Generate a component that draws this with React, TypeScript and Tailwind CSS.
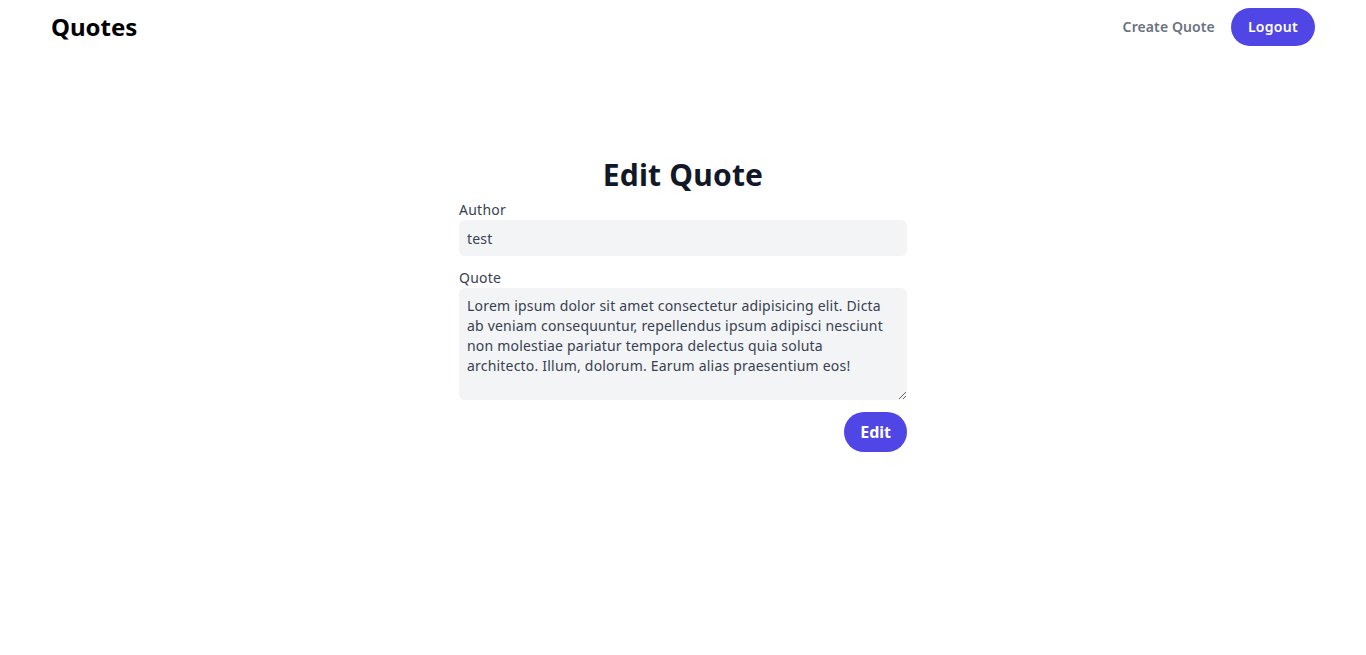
import { useState } from "react";

const initialQuote =
  "Lorem ipsum dolor sit amet consectetur adipisicing elit. Dicta ab veniam consequuntur, repellendus ipsum adipisci nesciunt non molestiae pariatur tempora delectus quia soluta architecto. Illum, dolorum. Earum alias praesentium eos!";

const Navbar = () => {
  return (
    <nav className="mx-auto flex max-w-7xl items-center justify-between px-2 py-2">
      <a href="#" className="text-2xl font-bold text-black">
        Quotes
      </a>
      <div className="flex items-center gap-4">
        <a href="#" className="text-sm font-semibold tracking-[0.1px] text-[#6b7280]">
          Create Quote
        </a>
        <button className="rounded-full bg-[#4f46e5] px-[17px] py-[9px] text-sm font-semibold tracking-[0.3px] text-white">
          Logout
        </button>
      </div>
    </nav>
  );
};

export default function App() {
  const [author, setAuthor] = useState("test");
  const [quote, setQuote] = useState(initialQuote);

  return (
    <div className="min-h-screen bg-white font-['Noto_Sans',sans-serif]">
      <Navbar />
      <main className="mx-auto max-w-md pt-[103px]">
        <h1 className="mb-[7px] text-center text-3xl font-bold tracking-[0.2px] text-[#111827]">
          Edit Quote
        </h1>
        <form
          className="flex flex-col"
          onSubmit={(event) => {
            event.preventDefault();
          }}
        >
          <label htmlFor="author" className="text-sm tracking-[0.25px] text-[#374151]">
            Author
          </label>
          <input
            id="author"
            type="text"
            className="h-9 w-full rounded-md bg-[#f3f4f6] px-2 text-sm tracking-[0.2px] text-[#374151] outline-none"
            value={author}
            onChange={(event) => setAuthor(event.target.value)}
          />
          <label htmlFor="quote" className="mt-3 text-sm tracking-[0.25px] text-[#374151]">
            Quote
          </label>
          <textarea
            id="quote"
            className="h-28 w-full rounded-md bg-[#f3f4f6] py-2 pl-2 pr-4 text-sm tracking-[0.2px] text-[#374151] outline-none"
            value={quote}
            onChange={(event) => setQuote(event.target.value)}
          />
          <div className="mt-3 flex justify-end">
            <button
              type="submit"
              className="rounded-full bg-[#4f46e5] px-4 py-2 text-base font-bold text-white"
            >
              Edit
            </button>
          </div>
        </form>
      </main>
    </div>
  );
}
